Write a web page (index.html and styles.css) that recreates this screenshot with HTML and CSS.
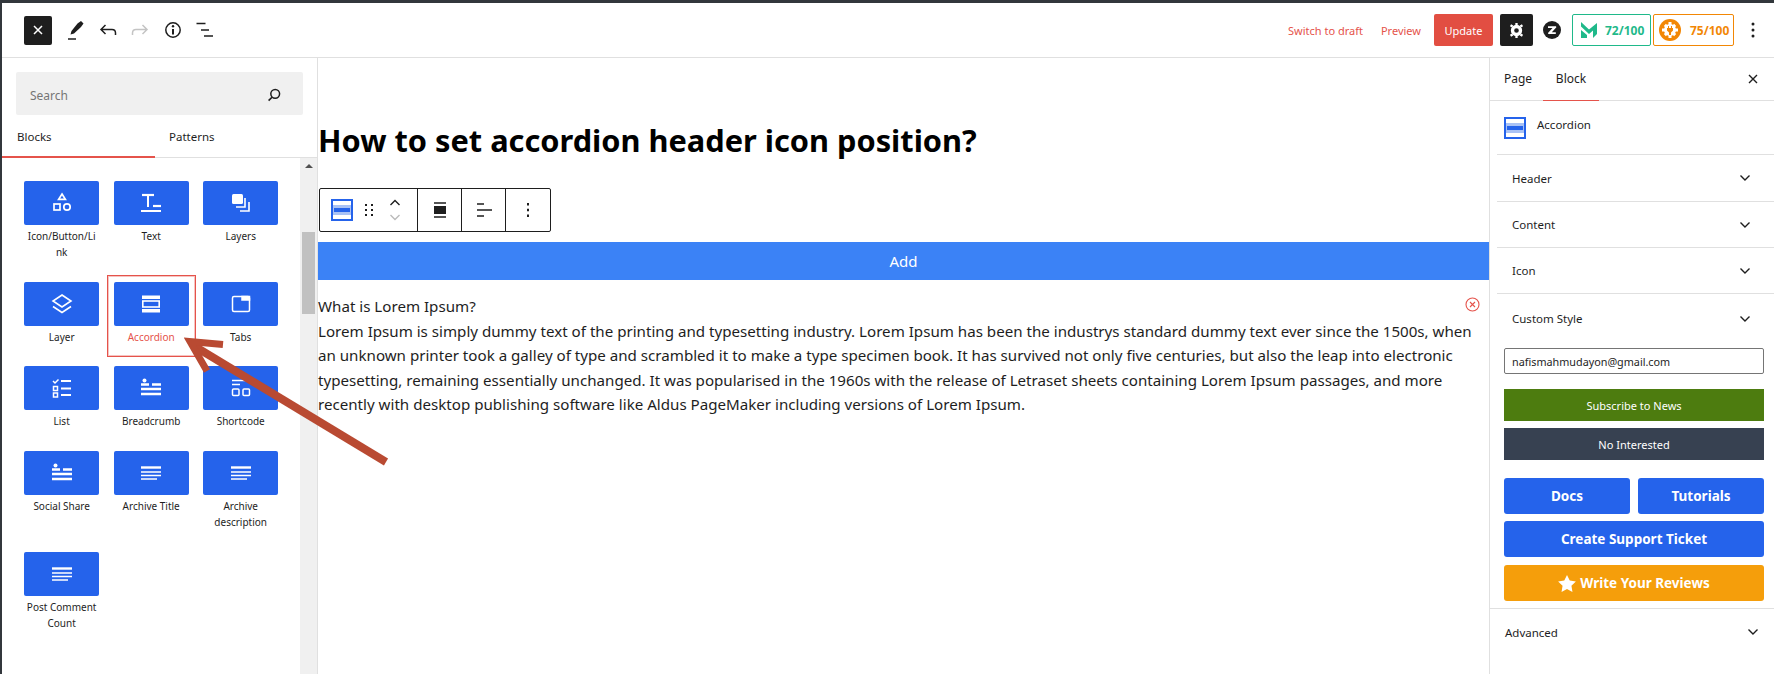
FILE: index.html
```html
<!DOCTYPE html>
<html lang="en">
<head>
    <meta charset="UTF-8">
    <meta name="viewport" content="width=device-width, initial-scale=1.0">
    <title>Edit Page</title>
    <link rel="stylesheet" href="styles.css">
</head>
<body>
    <svg class="defs" width="0" height="0">
        <symbol id="i-accordion" viewBox="0 0 24 24">
            <path d="M3 3.500h18v3.500H3zM3 17h18v3.500H3z" fill="currentColor"/>
            <rect x="3.800" y="9" width="16.400" height="6" fill="none" stroke="currentColor" stroke-width="1.600"/>
        </symbol>
        <symbol id="i-lines" viewBox="0 0 24 24">
            <path d="M2 6.500h20" stroke="currentColor" stroke-width="2.400"/>
            <path d="M2 11h20M2 14.500h20M2 18h16" stroke="currentColor" stroke-width="1.500"/>
        </symbol>
        <symbol id="i-share" viewBox="0 0 24 24">
            <circle cx="5.500" cy="4.500" r="2" fill="currentColor"/>
            <path d="M2 8.500h8M13 8.500h9" stroke="currentColor" stroke-width="2.400"/>
            <path d="M2 13h20M2 18h20" stroke="currentColor" stroke-width="2.400"/>
        </symbol>
        <symbol id="i-block" viewBox="0 0 22 22">
            <rect x="1" y="1" width="20" height="20" fill="#fff" stroke="#2563eb" stroke-width="2"/>
            <rect x="2" y="6" width="18" height="10" fill="#a9c2f5"/>
            <rect x="3" y="9" width="16" height="4" fill="#2563eb"/>
        </symbol>
        <symbol id="i-chev" viewBox="0 0 12 8">
            <path d="M1.500 1.500L6 6l4.500-4.500" fill="none" stroke="#1e1e1e" stroke-width="1.400"/>
        </symbol>
    </svg>

    <div class="edge-mark"></div>

    <header class="topbar">
        <div class="topbar-left">
            <button class="close-btn">
                <svg width="12" height="12" viewBox="0 0 12 12"><path d="M2 2l8 8M10 2l-8 8" stroke="#fff" stroke-width="1.500"/></svg>
            </button>
            <svg class="tool" width="24" height="24" viewBox="0 0 24 24"><path d="M14.500 5.500l3.500-2.500 2.500 2.500-2.500 3.500-7 6.500-3.500 1 1-3.500z" fill="#1e1e1e"/><path d="M5 21h8" stroke="#1e1e1e" stroke-width="1.500"/></svg>
            <svg class="tool" width="24" height="24" viewBox="0 0 24 24"><path d="M9.500 7L5 11.500 9.500 16M5 11.500h11c2.500 0 3.500 1.600 3.500 3.500v2" fill="none" stroke="#1e1e1e" stroke-width="1.500"/></svg>
            <svg class="tool" width="24" height="24" viewBox="0 0 24 24"><path d="M14.500 7L19 11.500 14.500 16M19 11.500H8c-2.500 0-3.500 1.600-3.500 3.500v2" fill="none" stroke="#c4c4c4" stroke-width="1.500"/></svg>
            <svg class="tool" width="24" height="24" viewBox="0 0 24 24"><circle cx="12" cy="12" r="7.200" fill="none" stroke="#1e1e1e" stroke-width="1.500"/><path d="M12 11v5.500" stroke="#1e1e1e" stroke-width="2"/><circle cx="12" cy="8.300" r="1.200" fill="#1e1e1e"/></svg>
            <svg class="tool" width="24" height="24" viewBox="0 0 24 24"><path d="M3.500 5.500h9M8 12h8M11 18h9" stroke="#1e1e1e" stroke-width="1.600"/></svg>
        </div>
        <div class="topbar-right">
            <a class="link-red draft">Switch to draft</a>
            <a class="link-red preview">Preview</a>
            <button class="update-btn">Update</button>
            <button class="gear-btn">
                <svg width="15" height="15" viewBox="0 0 18 18"><circle cx="9" cy="9" r="4.800" fill="none" stroke="#fff" stroke-width="4"/><path d="M7.600 0h2.800v3H7.600zM7.600 15h2.800v3H7.600zM1.100 4l1.400-2.400 2.600 1.500-1.400 2.400zM12.900 14.900l1.400-2.400 2.600 1.500-1.400 2.400zM1.100 14l2.600-1.500 1.400 2.400-2.600 1.500zM12.900 3.100l2.600-1.500L16.900 4l-2.600 1.500z" fill="#fff"/></svg>
            </button>
            <svg class="zlogo" width="18" height="18" viewBox="0 0 18 18"><circle cx="9" cy="9" r="9" fill="#1e1e1e"/><path d="M5 6.200h6.500L5.600 12.600M12.800 5.600L6.800 12.200h6" fill="none" stroke="#fff" stroke-width="1.700"/></svg>
            <div class="score score-green">
                <svg width="16" height="16" viewBox="0 0 16 16"><path d="M0 0l8 7.500L16 1v11l-4 4V8.500L8 12 0 4.500zM0 8l6 5v3H0z" fill="#1fb98a"/></svg>
                <span>72/100</span>
            </div>
            <div class="score score-orange">
                <svg width="22" height="22" viewBox="0 0 22 22"><circle cx="11" cy="11" r="11" fill="#f28705"/><path d="M9.500 3h3v3h-3zM9.500 16h3v3h-3zM3 9.500h3v3H3zM16 9.500h3v3h-3zM4.800 6.900l2.100-2.100 2.100 2.100-2.100 2.100zM13 15.100l2.100-2.100 2.100 2.100-2.100 2.100zM4.800 15.100L6.900 13 9 15.100l-2.100 2.100zM13 6.900l2.100-2.100 2.100 2.100L15.100 9z" fill="#fff"/><circle cx="11" cy="11" r="6" fill="#fff"/><path d="M9 7h1v2h2V7h1v2h1v2.500L12 13.500V16h-2v-2.500L8 11.500V9h1z" fill="#f28705"/></svg>
                <span>75/100</span>
            </div>
            <svg class="kebab" width="4" height="16" viewBox="0 0 4 16"><circle cx="2" cy="2" r="1.500"/><circle cx="2" cy="8" r="1.500"/><circle cx="2" cy="14" r="1.500"/></svg>
        </div>
    </header>

    <div class="main">
        <aside class="inserter">
            <div class="search">
                <span>Search</span>
                <svg width="16" height="16" viewBox="0 0 16 16"><circle cx="9.200" cy="6.800" r="4.400" fill="none" stroke="#1e1e1e" stroke-width="1.500"/><path d="M6 10.200L2.600 13.600" stroke="#1e1e1e" stroke-width="1.600"/></svg>
            </div>
            <div class="ins-tabs">
                <div class="ins-tab active">Blocks</div>
                <div class="ins-tab">Patterns</div>
            </div>
            <div class="ins-body">
                <div class="block-grid">
                    <div class="block-item">
                        <div class="tile"><svg width="24" height="24" viewBox="0 0 24 24" fill="none" stroke="#fff" stroke-width="1.700"><path d="M12 3l3.400 5.400H8.600z"/><rect x="4" y="13" width="6" height="6"/><circle cx="17" cy="16" r="3.200"/></svg></div>
                        <div class="block-name">Icon/Button/Li<br>nk</div>
                    </div>
                    <div class="block-item">
                        <div class="tile"><svg width="24" height="24" viewBox="0 0 24 24" fill="none" stroke="#fff"><path d="M3 4h12" stroke-width="2.200"/><path d="M9 4v12" stroke-width="2"/><path d="M14 15h8" stroke-width="2.200"/><path d="M2 20h20" stroke-width="2"/></svg></div>
                        <div class="block-name">Text</div>
                    </div>
                    <div class="block-item">
                        <div class="tile"><svg width="24" height="24" viewBox="0 0 24 24" fill="none" stroke="#fff" stroke-width="1.600"><rect x="3" y="3" width="11" height="10" rx="1.500" fill="#fff" stroke="none"/><path d="M7 16h9V7"/><path d="M11 20h9v-9"/></svg></div>
                        <div class="block-name">Layers</div>
                    </div>
                    <div class="block-item">
                        <div class="tile"><svg width="24" height="24" viewBox="0 0 24 24" fill="none" stroke="#fff" stroke-width="1.600"><path d="M12 3l9 6-9 6-9-6z"/><path d="M3 14.500l9 6 9-6"/></svg></div>
                        <div class="block-name">Layer</div>
                    </div>
                    <div class="block-item selected">
                        <div class="tile"><svg width="24" height="24" class="tile-white"><use href="#i-accordion"/></svg></div>
                        <div class="block-name">Accordion</div>
                    </div>
                    <div class="block-item">
                        <div class="tile"><svg width="24" height="24" viewBox="0 0 24 24" fill="none" stroke="#fff" stroke-width="1.500"><rect x="3.500" y="4.500" width="17" height="15" rx="1.500"/><rect x="13" y="4.500" width="7.500" height="3.500" fill="#fff"/></svg></div>
                        <div class="block-name">Tabs</div>
                    </div>
                    <div class="block-item">
                        <div class="tile"><svg width="24" height="24" viewBox="0 0 24 24" fill="none" stroke="#fff" stroke-width="1.500"><path d="M3 5l2 2 3.500-3.500"/><rect x="3.500" y="10.500" width="4" height="4"/><rect x="3.500" y="17" width="4" height="4"/><path d="M11 5h10M11 12.500h10M11 19h10" stroke-width="2"/></svg></div>
                        <div class="block-name">List</div>
                    </div>
                    <div class="block-item">
                        <div class="tile"><svg width="24" height="24" class="tile-white"><use href="#i-share"/></svg></div>
                        <div class="block-name">Breadcrumb</div>
                    </div>
                    <div class="block-item">
                        <div class="tile"><svg width="24" height="24" viewBox="0 0 24 24" fill="none" stroke="#fff" stroke-width="1.500"><path d="M3 4.500h18M3 8.500h8"/><rect x="3.500" y="13" width="6.500" height="6.500" rx="1"/><rect x="14" y="13" width="6.500" height="6.500" rx="1"/></svg></div>
                        <div class="block-name">Shortcode</div>
                    </div>
                    <div class="block-item">
                        <div class="tile"><svg width="24" height="24" class="tile-white"><use href="#i-share"/></svg></div>
                        <div class="block-name">Social Share</div>
                    </div>
                    <div class="block-item">
                        <div class="tile"><svg width="24" height="24" class="tile-white"><use href="#i-lines"/></svg></div>
                        <div class="block-name">Archive Title</div>
                    </div>
                    <div class="block-item">
                        <div class="tile"><svg width="24" height="24" class="tile-white"><use href="#i-lines"/></svg></div>
                        <div class="block-name">Archive description</div>
                    </div>
                    <div class="block-item">
                        <div class="tile"><svg width="24" height="24" class="tile-white"><use href="#i-lines"/></svg></div>
                        <div class="block-name">Post Comment Count</div>
                    </div>
                </div>
                <div class="scrollbar">
                    <div class="scroll-up"></div>
                    <div class="scroll-thumb"></div>
                </div>
            </div>
        </aside>

        <main class="canvas">
            <h1 class="post-title">How to set accordion header icon position?</h1>
            <div class="block-toolbar">
                <div class="tb-group tb-first">
                    <svg class="tb-icon" width="22" height="22"><use href="#i-block"/></svg>
                    <svg class="tb-drag" width="10" height="14" viewBox="0 0 10 14"><path d="M1 1h2v2H1zM7 1h2v2H7zM1 6h2v2H1zM7 6h2v2H7zM1 11h2v2H1zM7 11h2v2H7z" fill="#1e1e1e"/></svg>
                    <div class="tb-mover">
                        <svg width="12" height="8" viewBox="0 0 12 8"><path d="M1.500 6L6 1.500 10.500 6" fill="none" stroke="#1e1e1e" stroke-width="1.400"/></svg>
                        <svg width="12" height="8" viewBox="0 0 12 8"><path d="M1.500 2L6 6.500 10.500 2" fill="none" stroke="#bbb" stroke-width="1.400"/></svg>
                    </div>
                </div>
                <div class="tb-group tb-cell">
                    <svg width="14" height="16" viewBox="0 0 14 16"><path d="M1 1h12M1 15h12" stroke="#1e1e1e" stroke-width="1.500"/><rect x="1" y="4" width="12" height="8" fill="#1e1e1e"/></svg>
                </div>
                <div class="tb-group tb-cell">
                    <svg width="16" height="16" viewBox="0 0 16 16"><path d="M1 2h7M1 8h15M1 14h7" stroke="#1e1e1e" stroke-width="1.500"/></svg>
                </div>
                <div class="tb-group tb-cell tb-last">
                    <svg width="4" height="14" viewBox="0 0 4 14"><path d="M1 0h2v2.400H1zM1 5.800h2v2.400H1zM1 11.600h2V14H1z" fill="#1e1e1e"/></svg>
                </div>
            </div>
            <div class="add-bar">Add</div>
            <div class="accordion">
                <svg class="remove-icon" width="15" height="15" viewBox="0 0 15 15"><circle cx="7.500" cy="7.500" r="6.500" fill="none" stroke="#e5534b" stroke-width="1.100"/><path d="M5 5l5 5M10 5l-5 5" stroke="#e5534b" stroke-width="1.100"/></svg>
                <div>What is Lorem Ipsum?</div>
                <p>Lorem Ipsum is simply dummy text of the printing and typesetting industry. Lorem Ipsum has been the industrys standard dummy text ever since the 1500s, when an unknown printer took a galley of type and scrambled it to make a type specimen book. It has survived not only five centuries, but also the leap into electronic typesetting, remaining essentially unchanged. It was popularised in the 1960s with the release of Letraset sheets containing Lorem Ipsum passages, and more recently with desktop publishing software like Aldus PageMaker including versions of Lorem Ipsum.</p>
            </div>
        </main>

        <aside class="sidebar">
            <div class="side-tabs">
                <div class="side-tab">Page</div>
                <div class="side-tab active">Block</div>
                <svg class="side-close" width="12" height="12" viewBox="0 0 12 12"><path d="M2 2l8 8M10 2l-8 8" stroke="#1e1e1e" stroke-width="1.400"/></svg>
            </div>
            <div class="block-card">
                <svg width="22" height="22"><use href="#i-block"/></svg>
                <span>Accordion</span>
            </div>
            <div class="panel-row panel-first">Header<svg width="12" height="8"><use href="#i-chev"/></svg></div>
            <div class="panel-row">Content<svg width="12" height="8"><use href="#i-chev"/></svg></div>
            <div class="panel-row">Icon<svg width="12" height="8"><use href="#i-chev"/></svg></div>
            <div class="panel-row panel-last">Custom Style<svg width="12" height="8"><use href="#i-chev"/></svg></div>
            <div class="promo">
                <input class="email" type="text" value="nafismahmudayon@gmail.com">
                <button class="news-btn green">Subscribe to News</button>
                <button class="news-btn slate">No Interested</button>
                <div class="btn-pair">
                    <button class="big-btn blue">Docs</button>
                    <button class="big-btn blue">Tutorials</button>
                </div>
                <button class="big-btn blue">Create Support Ticket</button>
                <button class="big-btn amber review-btn">
                    <svg width="18" height="17" viewBox="0 0 24 23"><path d="M12 0l3.700 7.600 8.300 1.200-6 5.900 1.400 8.300-7.400-3.900L4.600 23 6 14.700 0 8.800l8.300-1.200z" fill="#fff"/></svg>
                    Write Your Reviews
                </button>
            </div>
            <div class="advanced">Advanced<svg width="12" height="8"><use href="#i-chev"/></svg></div>
        </aside>
    </div>

    <svg class="arrow" width="230" height="140" viewBox="0 0 230 140">
        <path d="M202 127L10 11" fill="none" stroke="#b94a32" stroke-width="8"/>
        <path d="M39 9.500L6 6.500 23 36" fill="none" stroke="#b94a32" stroke-width="7"/>
    </svg>
</body>
</html>
```

FILE: styles.css
```css
* {
    box-sizing: border-box;
}
html, body {
    height: 100%;
}
body {
    margin: 0;
    font-family: "Noto Sans", sans-serif;
    color: #1e1e1e;
    background-color: #fff;
    border-top: 3px solid #32373c;
    border-left: 2px solid #32373c;
    overflow: hidden;
    display: flex;
    flex-direction: column;
    position: relative;
}
button {
    font-family: inherit;
    border: none;
    padding: 0;
}
.defs {
    position: absolute;
}
.edge-mark {
    position: absolute;
    left: -2px;
    top: 174px;
    width: 2px;
    height: 30px;
    background-color: #fff;
    border-top: 10px solid #e5534b;
    border-bottom: 9px solid #e5534b;
}

/* top bar */
.topbar {
    height: 55px;
    flex: none;
    display: flex;
    justify-content: space-between;
    align-items: center;
    border-bottom: 1px solid #e0e0e0;
    padding: 0 19px 0 22px;
}
.topbar-left, .topbar-right {
    display: flex;
    align-items: center;
}
.close-btn {
    width: 28px;
    height: 29px;
    background-color: #1e1e1e;
    border-radius: 2px;
    display: flex;
    align-items: center;
    justify-content: center;
    margin-right: 11px;
}
.tool {
    margin-right: 8.500px;
}
.link-red {
    color: #e5534b;
    font-size: 11px;
}
.draft {
    margin-right: 18px;
}
.preview {
    margin-right: 13px;
}
.update-btn {
    width: 59px;
    height: 32px;
    background-color: #e24e42;
    color: #fff;
    font-size: 11px;
    border-radius: 2px;
    margin-right: 7px;
}
.gear-btn {
    width: 33px;
    height: 32px;
    background-color: #1e1e1e;
    border-radius: 2px;
    display: flex;
    align-items: center;
    justify-content: center;
    margin-right: 10px;
}
.zlogo {
    margin-right: 11px;
}
.score {
    height: 32px;
    display: flex;
    align-items: center;
    border-radius: 2px;
    font-size: 12px;
    font-weight: 700;
    background-color: #fff;
}
.score-green {
    width: 79px;
    border: 1px solid #1fb98a;
    color: #1fb98a;
    padding-left: 8px;
    gap: 8px;
    margin-right: 2px;
}
.score-orange {
    width: 81px;
    border: 1px solid #f28705;
    color: #f28705;
    padding-left: 5px;
    gap: 9px;
    margin-right: 17px;
}
.kebab {
    fill: #1e1e1e;
}

/* layout */
.main {
    flex: 1;
    display: flex;
    min-height: 0;
}

/* left inserter */
.inserter {
    width: 316px;
    flex: none;
    border-right: 1px solid #e0e0e0;
    display: flex;
    flex-direction: column;
}
.search {
    height: 43px;
    margin: 14px 14px 0;
    padding: 3px 21px 0 14px;
    background-color: #f0f0f0;
    border-radius: 2px;
    display: flex;
    align-items: center;
    justify-content: space-between;
    font-size: 12px;
    color: #757575;
}
.ins-tabs {
    height: 43px;
    flex: none;
    display: flex;
    border-bottom: 1px solid #e0e0e0;
}
.ins-tab {
    width: 153px;
    font-size: 11.500px;
    line-height: 44px;
    color: #1e1e1e;
}
.ins-tab.active {
    border-bottom: 2px solid #e5534b;
    height: 43px;
    padding-left: 15px;
}
.ins-tab:not(.active) {
    padding-left: 14px;
}
.ins-body {
    flex: 1;
    display: flex;
    min-height: 0;
    justify-content: space-between;
}
.block-grid {
    width: 298px;
    padding: 23px 0 0 22px;
    display: grid;
    grid-template-columns: 75.330px 75.330px 75.330px;
    column-gap: 14.200px;
    align-content: start;
}
.block-item {
    padding-bottom: 21.700px;
    position: relative;
}
.tile {
    height: 44px;
    background-color: #2563eb;
    border-radius: 2px;
    display: flex;
    align-items: center;
    justify-content: center;
}
.tile-white {
    color: #fff;
}
.block-name {
    margin-top: 3px;
    font-size: 10px;
    line-height: 16px;
    text-align: center;
}
.selected .block-name {
    color: #e5534b;
}
.selected::after {
    content: "";
    position: absolute;
    left: -7px;
    right: -7px;
    top: -7px;
    bottom: 9px;
    border: 1px solid #e5534b;
    box-shadow: inset 0 0 0 1px rgba(229, 83, 75, 0.35);
}
.scrollbar {
    width: 17px;
    flex: none;
    background-color: #f0f0f0;
    position: relative;
}
.scroll-up {
    width: 0;
    height: 0;
    margin: 6px auto 0;
    border-left: 4px solid transparent;
    border-right: 4px solid transparent;
    border-bottom: 4px solid #505050;
}
.scroll-thumb {
    position: absolute;
    top: 74px;
    left: 2px;
    width: 13px;
    height: 82px;
    background-color: #c1c1c1;
}

/* canvas */
.canvas {
    flex: 1;
    min-width: 0;
}
.post-title {
    margin: 62px 0 0;
    font-size: 30.750px;
    line-height: 40px;
    font-weight: 700;
    color: #000;
}
.block-toolbar {
    margin: 28px 0 0 1px;
    width: 232px;
    height: 44px;
    display: flex;
    border: 1.300px solid #1e1e1e;
    border-radius: 2px;
    background-color: #fff;
}
.tb-group {
    display: flex;
    align-items: center;
    border-right: 1.300px solid #1e1e1e;
    height: 100%;
}
.tb-first {
    width: 98px;
    padding-left: 11px;
}
.tb-icon {
    margin-right: 11px;
}
.tb-mover {
    display: flex;
    flex-direction: column;
    gap: 6px;
    margin-left: 15px;
}
.tb-cell {
    width: 44px;
    justify-content: center;
}
.tb-last {
    width: 44px;
    border-right: none;
}
.add-bar {
    margin-top: 10px;
    height: 38px;
    background-color: #3b82f6;
    color: #fff;
    font-size: 15px;
    line-height: 38px;
    text-align: center;
}
.accordion {
    position: relative;
    margin-top: 14px;
    font-size: 15.130px;
    line-height: 24.500px;
    color: #1e1e1e;
}
.accordion p {
    margin: 0;
}
.remove-icon {
    position: absolute;
    right: 9px;
    top: 3px;
}

/* right sidebar */
.sidebar {
    width: 285px;
    flex: none;
    border-left: 1px solid #e0e0e0;
}
.side-tabs {
    height: 43px;
    display: flex;
    align-items: center;
    border-bottom: 1px solid #e0e0e0;
    font-size: 12px;
    position: relative;
}
.side-tab {
    height: 43px;
    line-height: 42px;
}
.side-tab:first-child {
    margin-left: 14px;
    margin-right: 13px;
    width: 26px;
}
.side-tab.active {
    width: 56px;
    text-align: center;
    border-bottom: 1px solid #e5534b;
}
.side-close {
    position: absolute;
    right: 15px;
    top: 15px;
}
.block-card {
    height: 54px;
    margin-left: 7px;
    padding-left: 7px;
    display: flex;
    align-items: center;
    gap: 11px;
    font-size: 11.500px;
    border-bottom: 1px solid #e0e0e0;
}
.block-card span {
    margin-bottom: 6px;
}
.panel-row {
    height: 46px;
    margin-left: 7px;
    padding: 0 23px 0 15px;
    display: flex;
    align-items: center;
    justify-content: space-between;
    font-size: 11.500px;
    border-bottom: 1px solid #e0e0e0;
}
.panel-first {
    height: 47px;
}
.panel-last {
    border-bottom: none;
    height: 49px;
}
.promo {
    padding: 5px 10px 7px 14px;
    display: flex;
    flex-direction: column;
    gap: 7px;
    border-bottom: 1px solid #e0e0e0;
}
.email {
    height: 26px;
    border: 1px solid #757575;
    border-radius: 2px;
    padding: 0 7px;
    font-family: inherit;
    font-size: 10.800px;
    color: #1e1e1e;
    margin-bottom: 8px;
}
.news-btn {
    height: 32px;
    color: #fff;
    font-size: 11px;
}
.green {
    background-color: #4d7c0f;
}
.slate {
    background-color: #374151;
    margin-bottom: 11px;
}
.btn-pair {
    display: flex;
    gap: 8px;
}
.btn-pair .big-btn {
    flex: 1;
}
.big-btn {
    height: 36px;
    border-radius: 3px;
    color: #fff;
    font-size: 13.500px;
    font-weight: 700;
}
.blue {
    background-color: #2563eb;
}
.amber {
    background-color: #f59e0b;
}
.review-btn {
    display: flex;
    align-items: center;
    justify-content: center;
    gap: 4px;
    margin-top: 1px;
}
.advanced {
    height: 46px;
    padding: 0 15px;
    display: flex;
    align-items: center;
    justify-content: space-between;
    font-size: 11.500px;
}

/* annotation drawn over the screenshot */
.arrow {
    position: absolute;
    left: 182px;
    top: 332px;
}
```
